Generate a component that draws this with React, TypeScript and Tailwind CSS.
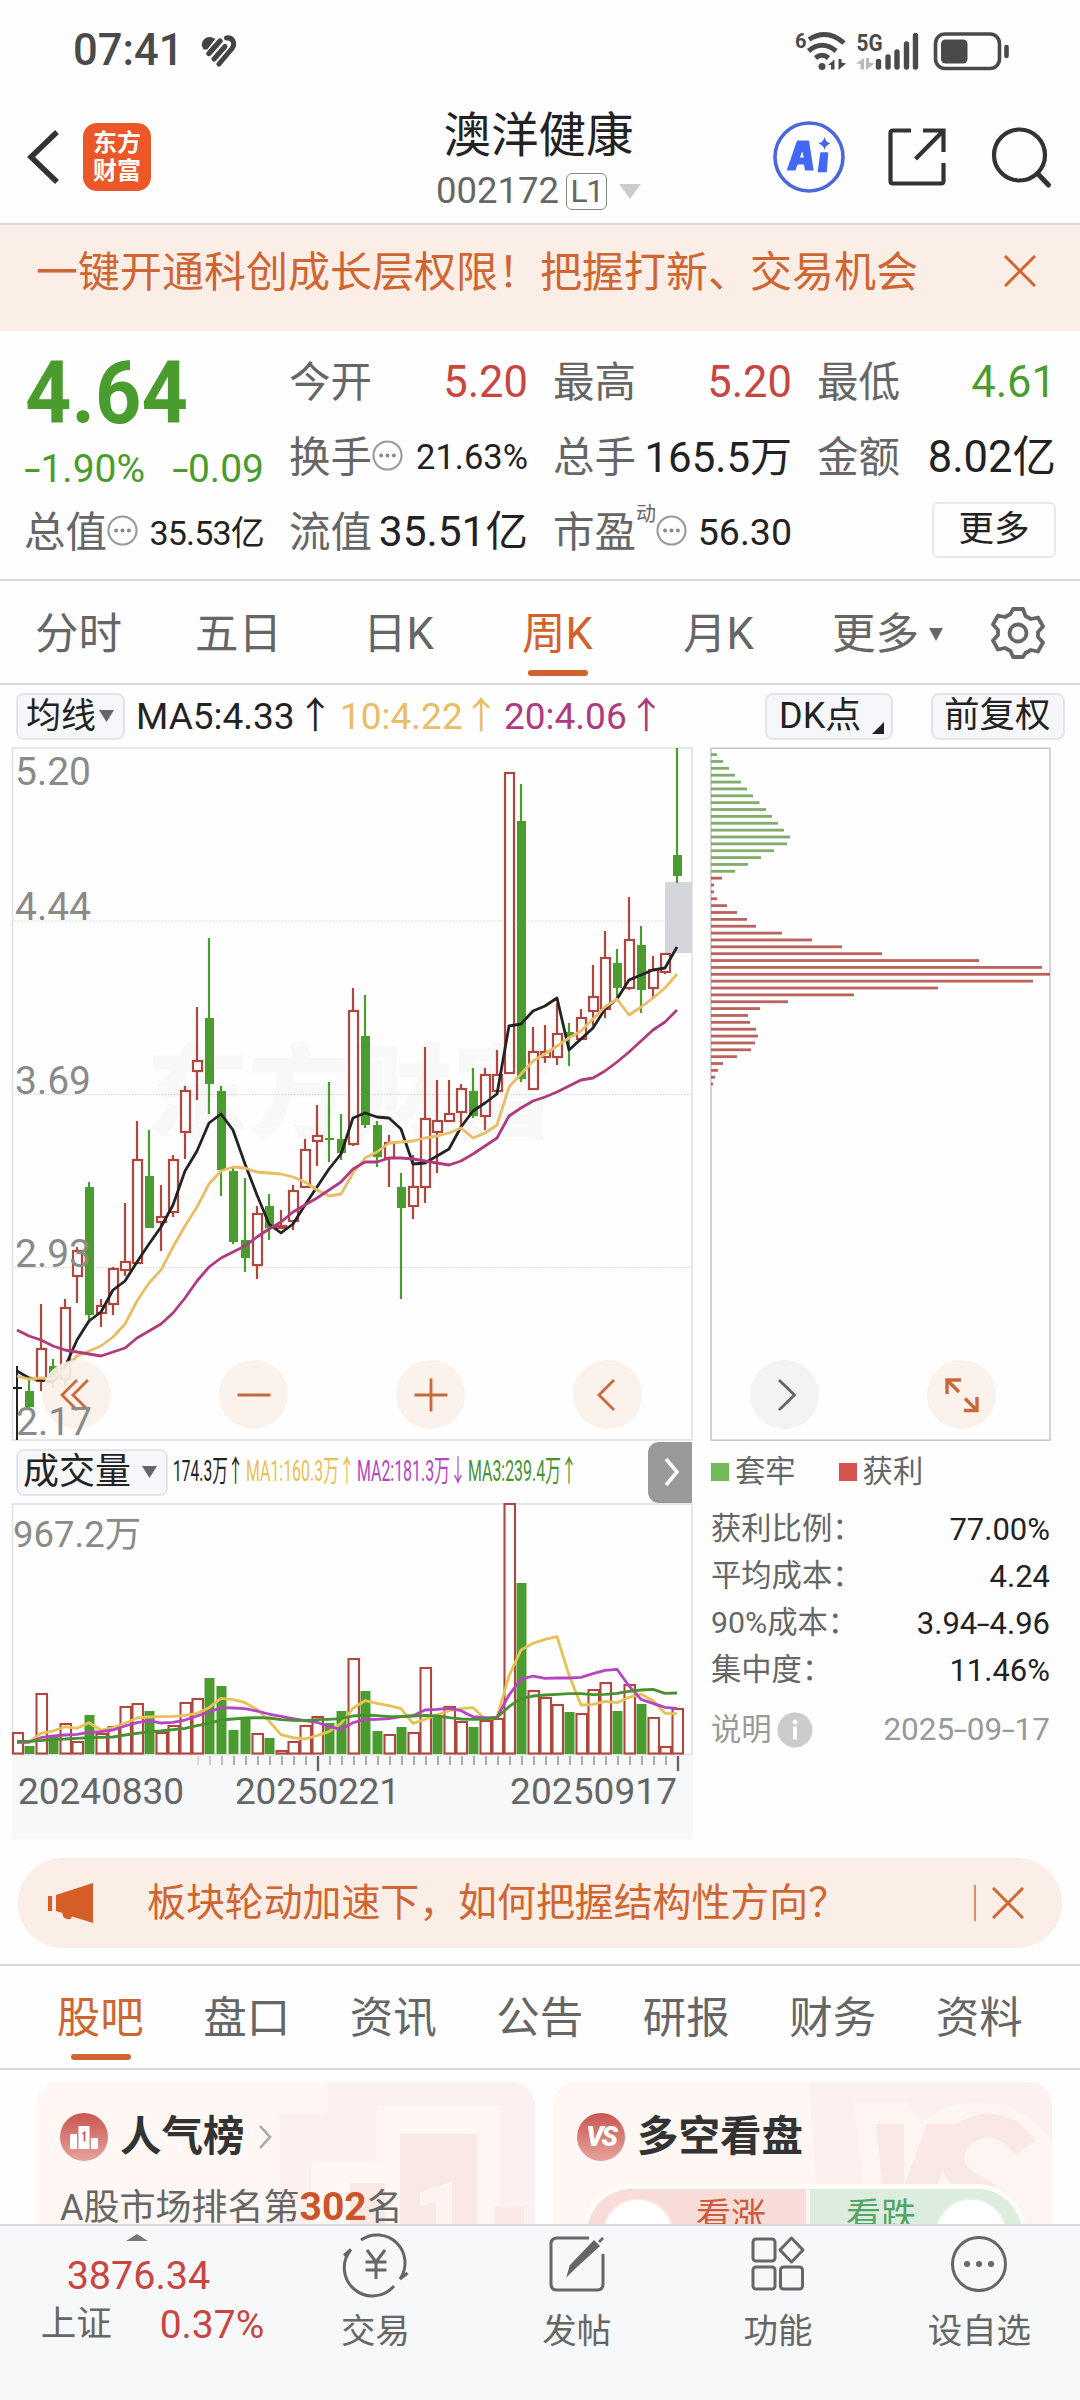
import type { ReactNode } from "react";

type Candle = [kind: "r" | "g" | "k", top: number, bottom: number, high: number, low: number];

// body top, body bottom, wick top, wick bottom
const candles: Candle[] = [
  ["k", 1388, 1388, 1366, 1440], ["g", 1391, 1407, 1380, 1410], ["r", 1349, 1381, 1304, 1391], ["g", 1366, 1380, 1359, 1388],
  ["r", 1308, 1379, 1299, 1386], ["r", 1251, 1276, 1247, 1303], ["g", 1187, 1315, 1182, 1320], ["r", 1306, 1313, 1299, 1327],
  ["r", 1269, 1304, 1267, 1315], ["r", 1262, 1270, 1203, 1276], ["r", 1160, 1263, 1121, 1264], ["g", 1176, 1228, 1130, 1228],
  ["r", 1217, 1222, 1185, 1251], ["r", 1160, 1212, 1155, 1217], ["r", 1091, 1132, 1086, 1159], ["r", 1061, 1071, 1007, 1100],
  ["g", 1018, 1084, 938, 1114], ["g", 1091, 1170, 1086, 1196], ["g", 1171, 1242, 1168, 1244], ["g", 1240, 1258, 1178, 1272],
  ["r", 1214, 1265, 1206, 1279], ["g", 1206, 1228, 1194, 1240], ["r", 1226, 1228, 1210, 1229], ["r", 1191, 1221, 1185, 1230],
  ["r", 1150, 1187, 1139, 1187], ["r", 1136, 1141, 1105, 1166], ["g", 1138, 1140, 1082, 1162], ["g", 1139, 1153, 1114, 1160],
  ["r", 1011, 1144, 988, 1146], ["g", 1036, 1125, 995, 1128], ["g", 1125, 1157, 1121, 1167], ["r", 1143, 1158, 1135, 1187],
  ["g", 1187, 1208, 1173, 1299], ["r", 1187, 1206, 1155, 1219], ["r", 1119, 1187, 1047, 1203], ["r", 1121, 1132, 1080, 1173],
  ["r", 1114, 1121, 1080, 1121], ["r", 1089, 1112, 1084, 1127], ["g", 1091, 1116, 1068, 1118], ["r", 1075, 1116, 1068, 1130],
  ["r", 1075, 1091, 1050, 1091], ["r", 773, 1073, 773, 1073], ["g", 821, 1079, 784, 1082], ["r", 1052, 1089, 1027, 1089],
  ["r", 1052, 1057, 1025, 1063], ["r", 1034, 1057, 1003, 1065], ["g", 1032, 1037, 1023, 1066], ["r", 1018, 1039, 1009, 1039],
  ["r", 997, 1011, 965, 1026], ["r", 958, 1009, 931, 1018], ["g", 963, 988, 949, 998], ["r", 940, 988, 897, 990],
  ["g", 945, 990, 926, 1013], ["r", 970, 988, 956, 998], ["r", 954, 972, 954, 974], ["g", 855, 876, 748, 883],
];

const ma5 = [1371, 1378, 1380, 1382, 1367, 1340, 1321, 1312, 1290, 1281, 1262, 1244, 1227, 1205, 1171, 1151, 1123, 1114, 1130, 1164, 1195, 1224, 1233, 1224, 1205, 1187, 1169, 1154, 1118, 1113, 1117, 1118, 1129, 1164, 1163, 1156, 1149, 1127, 1111, 1103, 1094, 1026, 1024, 1011, 1006, 998, 1050, 1039, 1028, 1009, 999, 980, 975, 970, 968, 947];
const ma10 = [1376, 1379, 1378, 1379, 1369, 1356, 1351, 1346, 1337, 1324, 1301, 1283, 1270, 1247, 1226, 1207, 1184, 1171, 1167, 1168, 1172, 1173, 1174, 1177, 1182, 1190, 1196, 1194, 1173, 1158, 1152, 1143, 1142, 1141, 1138, 1136, 1133, 1128, 1138, 1133, 1125, 1087, 1074, 1061, 1054, 1046, 1038, 1031, 1019, 1007, 999, 1015, 1007, 998, 988, 974];
const ma20 = [1330, 1336, 1340, 1346, 1350, 1352, 1354, 1356, 1352, 1348, 1338, 1331, 1324, 1313, 1298, 1281, 1267, 1258, 1252, 1246, 1237, 1229, 1222, 1212, 1205, 1198, 1190, 1182, 1169, 1162, 1162, 1158, 1158, 1159, 1161, 1163, 1165, 1161, 1154, 1146, 1138, 1116, 1108, 1101, 1097, 1092, 1086, 1080, 1078, 1071, 1062, 1052, 1041, 1030, 1022, 1010];

// volume bar tops, one letter per bar for the colour
const volColors = "rgrgrrgrrrrgrrrrggggrgrrrrggrggrgrrgrrgrrrgrrrgrrrgrgrrr";
const volumes = [1733, 1746, 1694, 1737, 1724, 1742, 1715, 1734, 1727, 1707, 1704, 1711, 1733, 1726, 1703, 1699, 1678, 1686, 1730, 1718, 1734, 1738, 1751, 1742, 1726, 1717, 1723, 1711, 1659, 1691, 1731, 1735, 1727, 1733, 1668, 1716, 1707, 1722, 1727, 1721, 1719, 1504, 1583, 1691, 1698, 1705, 1712, 1714, 1690, 1683, 1711, 1685, 1704, 1718, 1747, 1709];

const volMa1 = [937, 935, 910, 903, 890, 895, 878, 900, 893, 880, 864, 861, 860, 859, 856, 850, 833, 805, 809, 818, 838, 873, 914, 923, 927, 917, 905, 880, 835, 812, 820, 827, 836, 880, 868, 855, 842, 836, 833, 866, 862, 738, 660, 640, 628, 620, 735, 825, 823, 814, 818, 802, 792, 812, 850, 851];
const volMa2 = [937, 937, 923, 918, 915, 913, 907, 905, 900, 888, 878, 872, 879, 877, 870, 858, 846, 833, 834, 836, 843, 852, 859, 866, 872, 877, 890, 898, 878, 869, 868, 866, 860, 857, 840, 838, 835, 842, 860, 863, 862, 795, 748, 738, 745, 744, 744, 742, 731, 721, 718, 768, 808, 820, 832, 835];
const volMa3 = [934, 934, 932, 928, 927, 925, 923, 922, 921, 915, 910, 905, 903, 899, 895, 887, 880, 870, 867, 864, 863, 864, 869, 871, 872, 869, 868, 866, 858, 855, 857, 860, 860, 858, 856, 858, 863, 867, 868, 867, 862, 830, 805, 798, 795, 793, 791, 791, 794, 793, 790, 784, 780, 778, 790, 789];

const chips = [6, 12, 18, 24, 30, 36, 42, 48.5, 55, 61, 67, 73, 79, 76, 63, 50, 37, 24, 11, 3, 3, 6, 16, 26, 36, 45, 71, 101, 131, 171, 268, 331, 339, 322, 227, 143, 77, 49, 37, 39, 45, 47, 44, 40, 26, 12, 7, 4, 2];

const cx = (i: number) => 17 + i * 12;
const toPoints = (ys: number[]) => ys.map((y, i) => `${cx(i)},${y}`).join(" ");
const toVolPoints = (ys: number[]) => ys.map((y, i) => `${cx(i)},${(1430 + y / 3).toFixed(1)}`).join(" ");

const RED = "#b0473f";
const GREEN = "#4a9c2e";

function KLineChart() {
  return (
    <svg width="684" height="694" viewBox="10 747 684 694" className="block" fontFamily="Roboto, 'Noto Sans CJK SC', sans-serif">
      <text x="146" y="1130" fontSize="102" fontWeight="900" fill="#f8f8f8" fontFamily="'Noto Sans CJK SC', sans-serif">东方财富</text>
      {[921, 1094.5, 1267.5].map((y) => (
        <line key={y} x1="12" x2="692" y1={y} y2={y} stroke="#d4d4d4" strokeWidth="1" strokeDasharray="1.5 1.5" />
      ))}
      <rect x="12.5" y="748" width="679.5" height="692" fill="none" stroke="#e2e2e4" strokeWidth="1.6" />
      <rect x="665" y="882" width="27" height="71" fill="#d4d6dc" />
      {candles.map(([kind, top, bottom, high, low], i) => {
        const x = cx(i);
        if (kind === "k") {
          return <path key={i} d={`M${x} ${high}V${low}M${x - 4} ${top}h9`} stroke="#222" strokeWidth="2" />;
        }
        const color = kind === "r" ? RED : GREEN;
        return (
          <g key={i}>
            <path d={`M${x} ${high}V${top}M${x} ${bottom}V${low}`} stroke={color} strokeWidth="2.2" />
            {kind === "r" ? (
              <rect x={x - 4} y={top} width="9" height={bottom - top} fill="#fff" stroke={color} strokeWidth="2.2" />
            ) : (
              <rect x={x - 4} y={top} width="9" height={bottom - top} fill={color} />
            )}
          </g>
        );
      })}
      <g fill="none" strokeWidth="2.8" strokeLinejoin="round">
        <polyline points={toPoints(ma5)} stroke="#232323" />
        <polyline points={toPoints(ma10)} stroke="#e8bd66" />
        <polyline points={toPoints(ma20)} stroke="#b03a7e" />
      </g>
      <g fontSize="39" fill="#8a8a8a">
        <text x="15" y="785">5.20</text>
        <text x="15" y="919.5">4.44</text>
        <text x="15" y="1093.5">3.69</text>
        <text x="15" y="1267">2.93</text>
      </g>
    </svg>
  );
}

function VolumeChart() {
  return (
    <svg width="684" height="337" viewBox="10 1503 684 337" className="block" fontFamily="Roboto, 'Noto Sans CJK SC', sans-serif">
      <rect x="12" y="1755" width="681" height="84" fill="#f7f8fa" />
      <rect x="12.5" y="1504" width="679.5" height="250.5" fill="none" stroke="#e2e2e4" strokeWidth="1.6" />
      <text x="13" y="1546.5" fontSize="36.5" fill="#8a8a8a">967.2万</text>
      {volumes.map((top, i) => {
        const x = Math.max(cx(i) - 4.5, 13);
        const w = cx(i) + 6 - x;
        return volColors[i] === "r" ? (
          <rect key={i} x={x} y={top} width={w} height={1753.5 - top} fill="#fff" stroke={RED} strokeWidth="2.1" />
        ) : (
          <rect key={i} x={x} y={top} width={w - 0.5} height={1754 - top} fill={GREEN} />
        );
      })}
      <g fill="none" strokeWidth="2.8" strokeLinejoin="round">
        <polyline points={toVolPoints(volMa1)} stroke="#e6c154" />
        <polyline points={toVolPoints(volMa2)} stroke="#b546c2" />
        <polyline points={toVolPoints(volMa3)} stroke="#47922f" />
      </g>
      {Array.from({ length: 41 }, (_, n) => n + 15).map((i) => {
        const major = i === 25 || i === 55;
        return (
          <line
            key={i}
            x1={cx(i) + 1}
            x2={cx(i) + 1}
            y1="1756"
            y2={major ? 1771 : 1765}
            stroke={major ? "#666" : "#8f8f8f"}
            strokeWidth={major ? 2.4 : 1.4}
            opacity={i < 18 ? 0.4 + (i - 15) * 0.2 : 1}
          />
        );
      })}
      <g fontSize="37" fill="#666" textAnchor="start">
        <text x="18" y="1803.5" textLength="166">20240830</text>
        <text x="235" y="1803.5" textLength="165">20250221</text>
        <text x="510" y="1803.5" textLength="167">20250917</text>
      </g>
    </svg>
  );
}

function ChipChart() {
  return (
    <svg width="342" height="694" viewBox="710 747 342 694" className="block">
      <path d="M711 748.3H1050V1440.3H711Z" fill="none" stroke="#c9c9cb" strokeWidth="1.6" />
      {chips.map((len, i) => (
        <rect key={i} x="711" y={753.2 + i * 6.865} width={len} height="2.8" fill={i < 18 ? "#80ad69" : "#bb625c"} />
      ))}
    </svg>
  );
}

function Close({ size = 32 }: { size?: number }) {
  return (
    <svg width={size} height={size} viewBox="0 0 32 32" stroke="#cf6631" strokeWidth="3" fill="none">
      <path d="M1 1l30 30M31 1L1 31" />
    </svg>
  );
}

function Dots() {
  return (
    <svg width="31" height="31" viewBox="0 0 30 30" className="mb-[5px] shrink-0">
      <circle cx="15" cy="15" r="13.6" fill="none" stroke="#999" strokeWidth="2" />
      <g fill="#888">
        <circle cx="8.8" cy="15" r="1.9" />
        <circle cx="15" cy="15" r="1.9" />
        <circle cx="21.2" cy="15" r="1.9" />
      </g>
    </svg>
  );
}

// widens the hyphens of a number, Roboto's own is too short
function Num({ children }: { children: string }) {
  return children.split(/(-)/).map((part, i) =>
    part === "-" ? (
      <span key={i} className="mx-[0.06em] inline-block scale-x-150">-</span>
    ) : (
      part
    ),
  );
}

function StatusBar() {
  return (
    <div className="flex h-[100px] items-center pl-[73px] pt-[2px] text-[#4a4a4a]">
      <span className="w-[127px] text-[43.5px] font-medium leading-none">07:41</span>
      <svg width="37" height="32" viewBox="0 0 37 32" fill="none" stroke="#444" strokeLinecap="round">
        <path d="M4.500 13C1 7 7 1.500 13 4.500L6.500 13Z" fill="#444" strokeWidth="3" />
        <path d="M9 18.500L20 6" strokeWidth="5.400" />
        <path d="M14 24L25 11.500" strokeWidth="5" />
        <path d="M19 29L32 13.500C36 8 32 2 26.500 3" strokeWidth="5" />
      </svg>
      <svg width="219" height="42" viewBox="791 29 219 42" className="ml-[554px] overflow-visible" fill="none" stroke="#4a4a4a">
        <text x="795" y="46.500" fontSize="20" fontWeight="700" fill="#4a4a4a" stroke="none">6</text>
        <path d="M809 38.500Q827 27 844 42M808.500 50Q822 38.500 836 50M815.500 57Q822 51.500 828.500 57" strokeWidth="5" />
        <circle cx="822" cy="65.500" r="3.500" fill="#4a4a4a" stroke="none" />
        <path d="M828 64L834.500 58.500V68.500H831V64ZM838.500 58L841.500 58V61.500L846 62.500L838.500 69Z" fill="#4a4a4a" stroke="none" />
        <text x="856.500" y="49.500" fontSize="24" fontWeight="700" fill="#4a4a4a" stroke="none" textLength="26" lengthAdjust="spacingAndGlyphs">5G</text>
        <path d="M856 62.500L864 57V68.500H860.500V63ZM866 57L869 57V61.500L874.500 62.500L866 69Z" fill="#bbb" stroke="none" />
        <path d="M878.500 60.500V66M888 56v10M897 51v15M906.500 43v23M915.500 34.500V66" strokeWidth="5.400" strokeLinecap="round" />
        <rect x="935.500" y="33" width="64" height="34.500" rx="9.500" strokeWidth="3.600" />
        <rect x="941" y="38.500" width="26.500" height="24" rx="4.500" fill="#4a4a4a" stroke="none" />
        <path d="M1006.500 46v9" strokeWidth="4.600" strokeLinecap="round" />
      </svg>
    </div>
  );
}

function Header() {
  return (
    <header className="flex h-[125px] items-center border-b-2 border-[#d9d9dd]">
      <svg width="36" height="56" viewBox="0 0 36 56" fill="none" stroke="#333" strokeWidth="5.5" className="ml-[25px] mt-[-10px]">
        <path d="M32 3L6 28L32 53" />
      </svg>
      <div className="ml-[22px] mt-[-10px] flex h-[68px] w-[68px] flex-col items-center justify-center rounded-[14px] bg-[#ec5728] text-[24px] font-bold leading-[28px] text-white">
        <span>东方</span>
        <span>财富</span>
      </div>
      <div className="ml-[284px] mt-[-3px] flex w-[207px] flex-col items-center">
        <h1 className="text-[47.5px] leading-[56px] text-[#222]">澳洋健康</h1>
        <div className="mt-[6px] flex h-[42px] items-center text-[#666]">
          <span className="text-[36.5px] leading-none">002172</span>
          <span className="ml-[7px] flex h-[37px] w-[41px] items-center justify-center rounded-md border-[1.5px] border-[#888] text-[32px] leading-none tracking-tighter">L1</span>
          <svg width="22" height="15" viewBox="0 0 22 15" className="ml-3">
            <path d="M0 0h22L11 15Z" fill="#ccc" />
          </svg>
        </div>
      </div>
      <svg width="72" height="72" viewBox="0 0 72 72" className="ml-[131px] mt-[-10px]">
        <circle cx="36" cy="36" r="34" fill="none" stroke="#4a68dc" strokeWidth="3.600" />
        <path fillRule="evenodd" d="M24.500 20H35.500L40 49H32.500L31.500 43H24L22 49H14.500ZM29.500 28L26 37H31.500Z" fill="#4468f5" stroke="#4468f5" strokeWidth="1.200" strokeLinejoin="round" />
        <path d="M48 32H54.500L53 50.500H45.500Z" fill="#4468f5" stroke="#4468f5" strokeWidth="1.600" strokeLinejoin="round" />
        <path d="M51.500 16q1 5 6 6.500q-5 1.500-6 6.500q-1-5-6-6.500q5-1.500 6-6.500Z" fill="#4468f5" />
      </svg>
      <svg width="62" height="62" viewBox="0 0 62 62" fill="none" stroke="#333" strokeWidth="4.200" className="ml-[41px] mt-[-9px]">
        <path d="M25 4.500H7Q4.500 4.500 4.500 7V55Q4.500 57.500 7 57.500H55Q57.500 57.500 57.500 55V37" />
        <path d="M37 4.500H57.500V26M57 5L29.500 33" />
      </svg>
      <svg width="64" height="64" viewBox="0 0 64 64" fill="none" stroke="#333" strokeWidth="4.200" className="ml-[41px] mt-[-9px]">
        <circle cx="30.500" cy="30" r="25.500" />
        <path d="M48.500 48.500L59.500 60" strokeWidth="5" strokeLinecap="round" />
      </svg>
    </header>
  );
}

function Quote({ label, sup, dots, value, color = "text-[#222]", size = "text-[43.5px]" }: { label: string; sup?: string; dots?: boolean; value: string; color?: string; size?: string }) {
  return (
    <div className="flex h-[75px] items-center whitespace-nowrap text-[41.5px] leading-none text-[#666]">
      <span>{label}</span>
      {sup && <sup className="top-0 mt-[-38px] text-[20px] leading-none">{sup}</sup>}
      {dots && <Dots />}
      <span className={`ml-auto ${size} ${color}`}>{value}</span>
    </div>
  );
}

function QuotePanel() {
  return (
    <section className="grid h-[250px] grid-cols-[240px_239px_239px_239px] gap-x-[25px] border-b-2 border-[#d9d9dd] pl-[24px] pt-[14px]">
      <div className="text-[#4a9c2e]">
        <div className="h-[101px] pt-[4px]">
          <span className="ml-[1px] inline-block origin-left scale-x-[0.92] text-[88px] font-bold leading-[88px]">4.64</span>
        </div>
        <div className="flex h-[46px] items-center justify-between pl-[1px] text-[39px] leading-none">
          <span><Num>-1.90%</Num></span>
          <span><Num>-0.09</Num></span>
        </div>
        <div className="pt-[3px]">
          <Quote label="总值" dots value="35.53亿" size="text-[34px] tracking-[-0.8px]" />
        </div>
      </div>
      <div>
        <Quote label="今开" value="5.20" color="text-[#c9453f]" />
        <Quote label="换手" dots value="21.63%" size="text-[34.5px]" />
        <Quote label="流值" value="35.51亿" size="text-[42.5px]" />
      </div>
      <div>
        <Quote label="最高" value="5.20" color="text-[#c9453f]" />
        <Quote label="总手" value="165.5万" size="text-[42px]" />
        <Quote label="市盈" sup="动" dots value="56.30" size="text-[37.5px]" />
      </div>
      <div>
        <Quote label="最低" value="4.61" color="text-[#4a9c2e]" />
        <Quote label="金额" value="8.02亿" />
        <div className="flex h-[75px] items-center justify-end">
          <button className="mt-[-5px] h-[56px] w-[124px] rounded-md border-2 border-[#e7e8ea] text-[35.5px] leading-none text-[#222]">更多</button>
        </div>
      </div>
    </section>
  );
}

function PeriodTabs() {
  return (
    <nav className="flex h-[104px] items-center border-b-2 border-[#d9d9dd] pt-[5px] text-[43.5px] leading-none text-[#666]">
      <span className="ml-[35px] w-[160px]">分时</span>
      <span className="w-[168px]">五日</span>
      <span className="w-[159px]">日K</span>
      <span className="relative w-[161px] text-[#d2622d]">
        周K
        <i className="absolute left-[6px] top-[57px] h-[6px] w-[60px] rounded-[3px] bg-[#d2622d]" />
      </span>
      <span className="w-[149px]">月K</span>
      <span>更多</span>
      <svg width="14" height="13" viewBox="0 0 14 13" className="ml-[10px]">
        <path d="M0 0h14L7 13Z" fill="#666" />
      </svg>
      <svg width="54" height="54" viewBox="0 0 54 54" fill="none" stroke="#666" strokeWidth="3.800" strokeLinejoin="round" className="mt-[-4px] ml-[48px]">
        <path d="M22 3h10l2.500 7l5.500 3l7-1.500l5 9l-5 5.500v5l5 5.500l-5 9l-7-1.500l-5.500 3L32 51H22l-2.500-6l-5.500-3l-7 1.500l-5-9l5-5.500v-5l-5-5.500l5-9l7 1.500l5.500-3Z" />
        <circle cx="27" cy="27" r="8.500" />
      </svg>
    </nav>
  );
}

function PillButton({ className, children }: { className: string; children: ReactNode }) {
  return (
    <button className={`flex h-[47px] shrink-0 items-center rounded-lg border-2 border-[#e2e5ea] bg-[#f6f7fa] leading-none text-[#222] ${className}`}>
      {children}
    </button>
  );
}

function Triangle({ className }: { className?: string }) {
  return (
    <svg width="15" height="12" viewBox="0 0 15 12" className={className}>
      <path d="M0 0h15L7.500 12Z" fill="#666" />
    </svg>
  );
}

function MaRow() {
  return (
    <div className="flex h-[62px] items-center whitespace-nowrap pl-[16px] text-[37px] leading-none">
      <PillButton className="w-[109px] pl-[8px] text-[35px]">
        均线
        <Triangle className="ml-[3px]" />
      </PillButton>
      <span className="ml-[11px] w-[204px] text-[#222]">MA5:4.33<span className="ml-[2px]">↑</span></span>
      <span className="w-[164px] text-[#e8bd66]">10:4.22<span>↑</span></span>
      <span className="w-[261px] text-[#b03a7e]">20:4.06<span className="ml-[1px]">↑</span></span>
      <PillButton className="w-[128px] pl-[12px] text-[36px]">
        DK点
        <svg width="12" height="12" viewBox="0 0 12 12" className="ml-[11px] mt-[23px]">
          <path d="M12 0V12H0Z" fill="#222" />
        </svg>
      </PillButton>
      <PillButton className="ml-[38px] w-[134px] pl-[11px] text-[35.5px]">前复权</PillButton>
    </div>
  );
}

function RoundButton({ gray, children }: { gray?: boolean; children: ReactNode }) {
  return (
    <button className={`flex h-[69px] w-[69px] items-center justify-center rounded-full ${gray ? "bg-[#f3f3f3]" : "bg-[#fbf1ea]/90"}`}>
      <svg width="40" height="40" viewBox="-20 -20 40 40" fill="none" stroke={gray ? "#666" : "#c9683a"} strokeWidth="2.800">
        {children}
      </svg>
    </button>
  );
}

function ChartControls() {
  return (
    <div className="absolute left-[42px] top-[613px] flex w-[954px] justify-between">
      <RoundButton>
        <path d="M0 -15L-15 0L0 15M11 -15L-4 0L11 15" />
      </RoundButton>
      <RoundButton>
        <path d="M-16.500 0H16.500" />
      </RoundButton>
      <RoundButton>
        <path d="M-16.500 0H16.500M0 -16.500V16.500" />
      </RoundButton>
      <RoundButton>
        <path d="M6 -15L-9 0L6 15" />
      </RoundButton>
      <RoundButton gray>
        <path d="M-6 -15L9.500 0L-6 15" />
      </RoundButton>
      <RoundButton>
        <path d="M-15 -1V-15H-1M-14 -14L-3 -3M15 2V15.500H2M14 14.500L3 3.500" strokeWidth="3.400" />
      </RoundButton>
    </div>
  );
}

// indicator text is squeezed horizontally so that four values fit in the row
function Squeezed({ width, className, children }: { width: string; className: string; children: ReactNode }) {
  return (
    <span className={`${width} shrink-0`}>
      <span className={`inline-block origin-left whitespace-nowrap text-[30px] leading-none ${className}`}>{children}</span>
    </span>
  );
}

function VolumeHeader() {
  return (
    <div className="flex h-[62px] w-[692px] items-center pl-[16px]">
      <PillButton className="w-[152px] pl-[5px] text-[36px]">
        成交量
        <Triangle className="ml-[11px]" />
      </PillButton>
      <div className="ml-[5px] flex">
        <Squeezed width="w-[73px]" className="scale-x-[0.52] text-[#222]">174.3万↑</Squeezed>
        <Squeezed width="w-[111px]" className="scale-x-[0.53] text-[#e6c154]">MA1:160.3万↑</Squeezed>
        <Squeezed width="w-[111px]" className="scale-x-[0.53] text-[#b546c2]">MA2:181.3万↓</Squeezed>
        <Squeezed width="w-[111px]" className="scale-x-[0.53] text-[#47922f]">MA3:239.4万↑</Squeezed>
      </div>
      <button className="ml-auto flex h-[61px] w-[44px] items-center justify-center rounded-l-[11px] bg-[#999]">
        <svg width="18" height="30" viewBox="0 0 18 30" fill="none" stroke="#fff" strokeWidth="3.600" className="ml-[4px]">
          <path d="M3 2L14 15L3 28" />
        </svg>
      </button>
    </div>
  );
}

const stats = [
  { label: "获利比例：", value: "77.00%" },
  { label: "平均成本：", value: "4.24" },
  { label: "90%成本：", value: "3.94-4.96" },
  { label: "集中度：", value: "11.46%" },
];

function ChipInfo() {
  return (
    <div className="w-[339px] text-[30.3px] leading-none text-[#666]">
      <div className="flex h-[62px] items-center">
        <i className="h-[18px] w-[18px] bg-[#75b956]" />
        <span className="ml-[6px]">套牢</span>
        <i className="ml-[43px] h-[18px] w-[18px] bg-[#d75350]" />
        <span className="ml-[6px]">获利</span>
      </div>
      <div className="pt-[3px]">
        {stats.map((s) => (
          <div key={s.label} className="flex h-[47px] items-center justify-between">
            <span>{s.label}</span>
            <span className="text-[31px] text-[#222]"><Num>{s.value}</Num></span>
          </div>
        ))}
      </div>
      <div className="mt-[18px] flex h-[36px] items-center text-[#999]">
        <span>说明</span>
        <svg width="36" height="36" viewBox="0 0 36 36" className="ml-[5px]">
          <circle cx="18" cy="18" r="17.500" fill="#ccc" />
          <circle cx="18" cy="10" r="2.400" fill="#fff" />
          <path d="M18 14.500V27.500" stroke="#fff" strokeWidth="4" />
        </svg>
        <span className="ml-auto text-[31.5px]"><Num>2025-09-17</Num></span>
      </div>
    </div>
  );
}

function ChartArea() {
  return (
    <section className="relative">
      <div className="flex">
        <div className="ml-[10px]">
          <KLineChart />
        </div>
        <div className="ml-[16px]">
          <ChipChart />
        </div>
      </div>
      <div className="flex">
        <div className="w-[711px]">
          <VolumeHeader />
          <div className="ml-[10px]">
            <VolumeChart />
          </div>
        </div>
        <ChipInfo />
      </div>
      <ChartControls />
      <span className="absolute left-[16px] top-[656px] text-[39px] leading-none text-[#8a8a8a]">2.17</span>
    </section>
  );
}

function TipBar() {
  return (
    <div className="mx-[18px] mt-[18px] flex h-[90px] items-center rounded-full bg-[#fbeee7] text-[38.9px] leading-none text-[#cf6631]">
      <svg width="46" height="40" viewBox="0 0 46 40" fill="#d65f29" className="ml-[30px]">
        <path d="M0 13h4v15H0ZM8 12L45 0V40L34 36.500L24 33.500Q23 37 19 36Q14 35 14.500 30L8 28Z" />
      </svg>
      <span className="ml-[53px] whitespace-nowrap">板块轮动加速下，如何把握结构性方向？</span>
      <i className="ml-auto h-[36px] w-[2px] bg-[#cf6631]/70" />
      <span className="ml-[16px] mr-[38px]">
        <Close />
      </span>
    </div>
  );
}

const tabs = ["股吧", "盘口", "资讯", "公告", "研报", "财务", "资料"];

function ContentTabs() {
  return (
    <nav className="mt-[16px] flex h-[106px] items-center border-y-2 border-[#d9d9dd] pl-[27px] pt-[4px] text-[43.5px] leading-none text-[#666]">
      {tabs.map((tab, i) => (
        <span key={tab} className={`relative w-[146.500px] text-center ${i === 0 ? "text-[#cf6631]" : ""}`}>
          {tab}
          {i === 0 && <i className="absolute left-[44px] top-[57px] h-[6px] w-[60px] rounded-[3px] bg-[#cf6631]" />}
        </span>
      ))}
    </nav>
  );
}

function Cards() {
  return (
    <section className="flex h-[154px] gap-[18px] overflow-hidden pl-[36px] pt-[12px]">
      <div className="relative h-[220px] w-[499px] overflow-hidden rounded-[24px] bg-[#fef7f4]">
        <svg width="499" height="150" viewBox="0 0 499 150" className="absolute left-0 top-0">
          <path d="M291 0H499V150H464V24H341V81H275V150H243V32H291Z" fill="#fcf1ee" />
          <path d="M364 52H441V150H364ZM314 101H349V150H314ZM459 125H488V150H459Z" fill="#fae8e5" />
          <path d="M384 110L416 99V150H400V120L384 124Z" fill="#fdf4f1" />
        </svg>
        <div className="relative pl-[24px] pt-[30px]">
          <div className="flex h-[50px] items-center">
            <svg width="48" height="48" viewBox="0 0 48 48">
              <defs>
                <linearGradient id="badge" x1="0" y1="0" x2="0" y2="1">
                  <stop offset="0" stopColor="#c95650" />
                  <stop offset="1" stopColor="#e5a49b" />
                </linearGradient>
              </defs>
              <circle cx="24" cy="24" r="24" fill="url(#badge)" />
              <path d="M10 21h7v15h-7ZM18.500 13h11v23h-11ZM31 25h7v11h-7Z" fill="#fff" />
              <path d="M22.500 21l2-1.500v9" stroke="#cd625b" strokeWidth="1.800" fill="none" />
            </svg>
            <h2 className="ml-[12px] text-[41.500px] font-bold leading-none text-[#333]">人气榜</h2>
            <svg width="16" height="26" viewBox="0 0 16 26" fill="none" stroke="#aaa" strokeWidth="2.600" className="ml-[13px]">
              <path d="M2 2L12 13L2 24" />
            </svg>
          </div>
          <p className="mt-[26px] whitespace-nowrap text-[36px] leading-none text-[#666]">
            A股市场排名第<b className="text-[39px] font-bold text-[#cc5428]">302</b>名
          </p>
        </div>
      </div>
      <div className="relative h-[220px] w-[499px] overflow-hidden rounded-[24px] bg-[#fef7f4]">
        <svg width="243" height="150" viewBox="0 0 243 150" className="absolute right-0 top-0">
          <path d="M0 0H243V150H10Z" fill="#fcf1ee" />
          <path d="M45 20H98L112 42Q135 20 170 20Q220 22 243 62V150H60Z" fill="#fdf5f2" />
          <path d="M67 42H95V104L118 42H150L118 132H76Z" fill="#fae8e5" />
          <path d="M216 66Q200 42 174 44Q140 52 144 82Q150 100 172 108Q190 118 176 132L130 132" fill="none" stroke="#fae8e5" strokeWidth="24" />
        </svg>
        <div className="relative pl-[24px] pt-[30px]">
          <div className="flex h-[50px] items-center">
            <span className="flex h-[48px] w-[48px] items-center justify-center rounded-full bg-linear-to-b from-[#c95650] to-[#e5a49b] text-[27px] font-black italic leading-none tracking-[-2px] text-white">VS</span>
            <h2 className="ml-[12px] text-[41.500px] font-bold leading-none text-[#333]">多空看盘</h2>
          </div>
        </div>
        <div className="relative ml-[29px] mt-[22px] flex h-[100px] w-[445px] overflow-hidden rounded-full border-[5px] border-[#fffbf9] text-[35px] leading-none">
          <div className="relative flex w-[219px] justify-end bg-[#f7dcd8] pr-[40px] pt-[10px] text-[#cd5a3a]">
            <i className="absolute left-[15px] top-[9px] h-[72px] w-[72px] rounded-full border-2 border-[#fae6e2] bg-white" />
            看涨
          </div>
          <div className="relative ml-[4px] flex grow bg-[#dcedde] pl-[36px] pt-[10px] text-[#52a566]">
            看跌
            <i className="absolute right-[15px] top-[9px] h-[72px] w-[72px] rounded-full border-2 border-[#e8f4e9] bg-white" />
          </div>
        </div>
      </div>
    </section>
  );
}

function NavItem({ label, children }: { label: string; children: ReactNode }) {
  return (
    <div className="flex w-[201.300px] flex-col items-center pt-[8px]">
      <svg width="66" height="60" viewBox="-33 -30 66 60" fill="none" stroke="#666" strokeWidth="3" className="overflow-visible">
        {children}
      </svg>
      <span className="mt-[20px] text-[34.500px] leading-none">{label}</span>
    </div>
  );
}

function BottomNav() {
  return (
    <footer className="flex h-[176px] border-t-2 border-[#d9d9dd] bg-[#f7f8fa] text-[#666]">
      <div className="flex w-[275px] flex-col items-center pt-[8px] leading-none">
        <svg width="22" height="7" viewBox="0 0 22 7">
          <path d="M11 0L22 7H0Z" fill="#77777a" />
        </svg>
        <span className="mt-[15px] pl-[2px] text-[39.500px] text-[#c9453f]">3876.34</span>
        <div className="mt-[10px] flex items-center pl-[30px]">
          <span className="text-[35.500px]">上证</span>
          <span className="ml-[48px] text-[39px] text-[#c9453f]">0.37%</span>
        </div>
      </div>
      <NavItem label="交易">
        <path d="M-15 -24A28 28 0 0 1 24 15L31.500 9" />
        <path d="M18 22A28 28 0 0 1 -25 -14.500L-32 -8.500" />
        <path d="M-9 -14L0 -2L9 -14M0 -2V15M-10.500 -2H10.500M-10.500 6H10.500" />
      </NavItem>
      <NavItem label="发帖">
        <path d="M12 -26H-20Q-26 -26 -26 -20V20Q-26 26 -20 26H20Q26 26 26 20V-10" />
        <path d="M21 -18L-3 4L-8 9L-6 2L17 -22ZM22 -22L26 -26" strokeWidth="2.800" fill="#666" />
      </NavItem>
      <NavItem label="功能">
        <rect x="-25" y="-25" width="22" height="22" rx="3" />
        <rect x="-25" y="3" width="22" height="22" rx="3" />
        <rect x="2.500" y="3" width="22" height="22" rx="3" />
        <path d="M13.500 -26L25 -14L13.500 -2L2 -14Z" strokeLinejoin="round" />
      </NavItem>
      <NavItem label="设自选">
        <circle cx="0" cy="0" r="26.500" />
        <g fill="#666" stroke="none">
          <circle cx="-12" cy="0" r="3" />
          <circle cx="0" cy="0" r="3" />
          <circle cx="12" cy="0" r="3" />
        </g>
      </NavItem>
    </footer>
  );
}

export default function App() {
  return (
    <div className="h-[2400px] w-[1080px] overflow-hidden bg-[#fefefe] font-[Roboto,'Noto_Sans_CJK_SC',sans-serif]">
      <StatusBar />
      <Header />
      <div className="flex h-[106px] items-center bg-[#fbeee6] pl-[36px] text-[42px] leading-none text-[#cf6631]">
        <span className="mt-[-10px] whitespace-nowrap">一键开通科创成长层权限！把握打新、交易机会</span>
        <span className="ml-auto mr-[44px] mt-[-14px]">
          <Close />
        </span>
      </div>
      <QuotePanel />
      <PeriodTabs />
      <MaRow />
      <ChartArea />
      <TipBar />
      <ContentTabs />
      <Cards />
      <BottomNav />
    </div>
  );
}
